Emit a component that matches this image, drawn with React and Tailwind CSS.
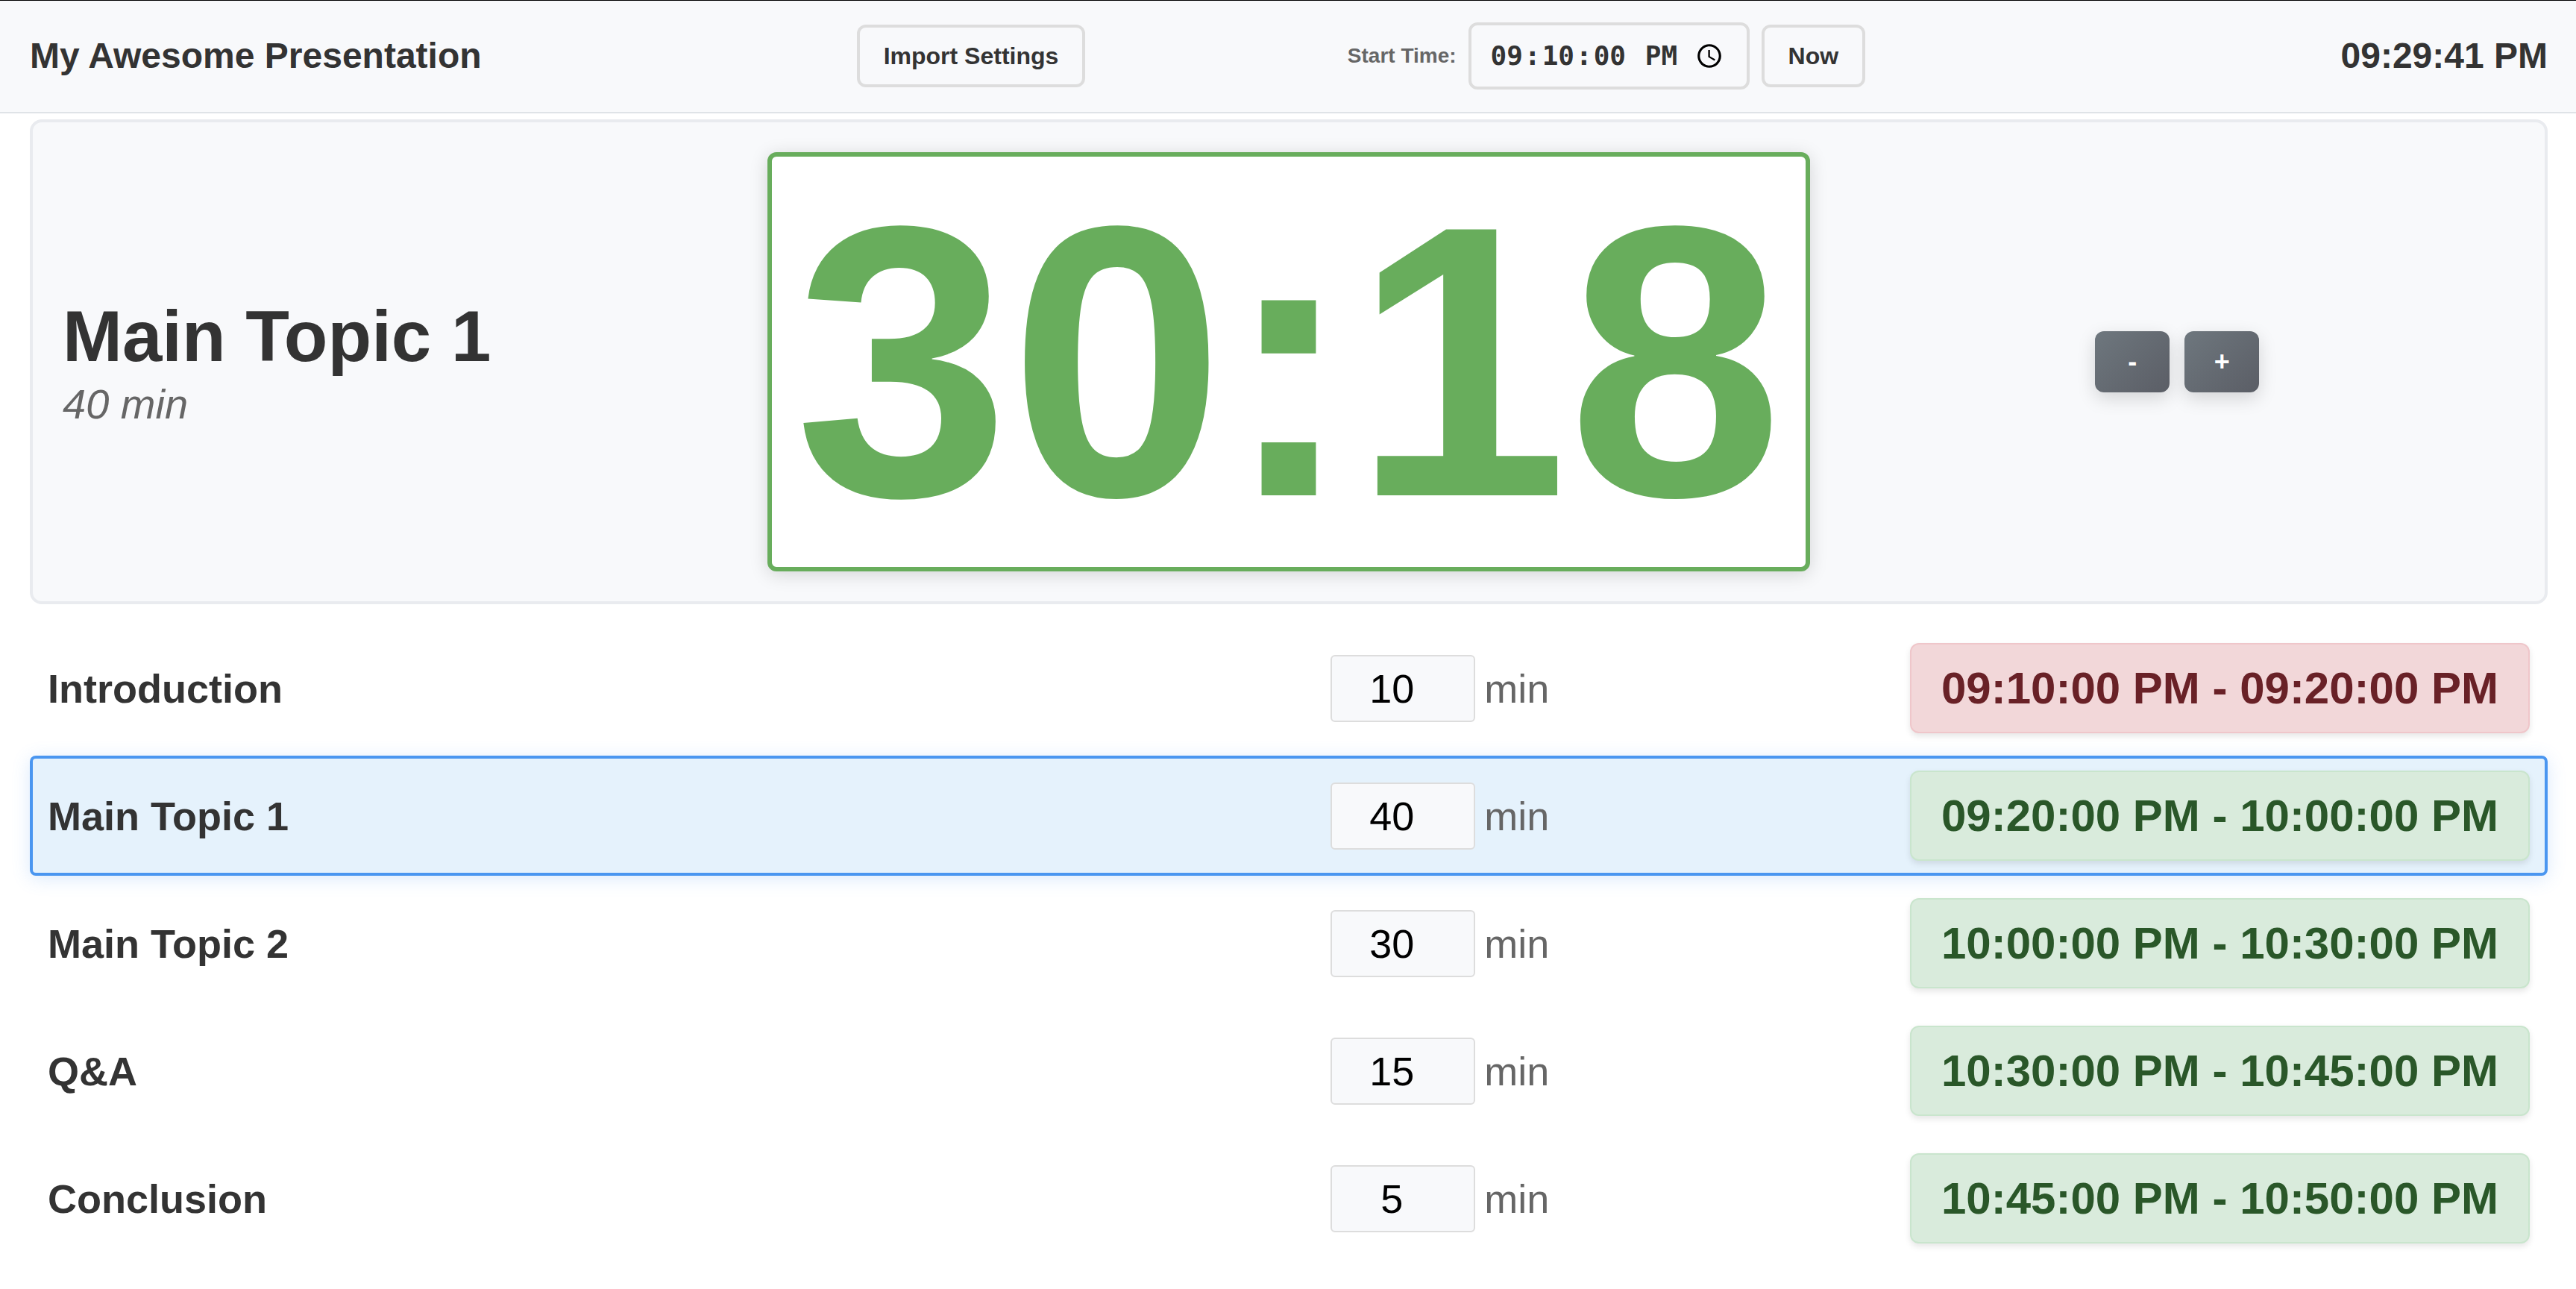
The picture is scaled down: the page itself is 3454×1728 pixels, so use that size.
import { useState } from "react";

const initialTopics = [
  { name: "Introduction", minutes: 10, range: "09:10:00 PM - 09:20:00 PM", status: "past" },
  { name: "Main Topic 1", minutes: 40, range: "09:20:00 PM - 10:00:00 PM", status: "current" },
  { name: "Main Topic 2", minutes: 30, range: "10:00:00 PM - 10:30:00 PM", status: "next" },
  { name: "Q&A", minutes: 15, range: "10:30:00 PM - 10:45:00 PM", status: "next" },
  { name: "Conclusion", minutes: 5, range: "10:45:00 PM - 10:50:00 PM", status: "next" },
];

function HeaderButton({ children }) {
  return (
    <button
      type="button"
      className="h-[84px] rounded-xl border-4 border-[#dddddd] bg-[#f8f9fb] px-8 text-[32px] leading-none font-bold whitespace-nowrap"
    >
      {children}
    </button>
  );
}

function Header() {
  const [start, setStart] = useState("21:10:00");
  return (
    <header className="grid grid-cols-4 items-center gap-8 border-t border-b-2 border-t-black border-b-[#dfe3e7] bg-[#f8f9fb] pt-[29px] pr-[38px] pb-[30px] pl-10">
      <h1 className="text-5xl leading-none font-bold whitespace-nowrap">My Awesome Presentation</h1>
      <div className="flex justify-center">
        <HeaderButton>Import Settings</HeaderButton>
      </div>
      <div className="flex items-center justify-center gap-4">
        <label htmlFor="start-time" className="text-[28px] font-bold whitespace-nowrap text-[#666666]">
          Start Time:
        </label>
        <input
          id="start-time"
          type="time"
          step="1"
          value={start}
          onChange={(e) => setStart(e.target.value)}
          className="h-[90px] w-[377px] rounded-xl border-4 border-[#dddddd] bg-[#f8f9fb] pr-7 pl-6 font-['DejaVu_Sans_Mono',monospace] text-4xl font-bold [&::-webkit-datetime-edit-ampm-field]:px-0.5 [&::-webkit-datetime-edit-hour-field]:px-0.5 [&::-webkit-datetime-edit-minute-field]:px-0.5 [&::-webkit-datetime-edit-second-field]:px-0.5"
        />
        <HeaderButton>Now</HeaderButton>
      </div>
      <time className="text-right text-5xl leading-none font-bold whitespace-nowrap">09:29:41 PM</time>
    </header>
  );
}

function AdjustButton({ label, children }) {
  return (
    <button
      type="button"
      aria-label={label}
      className="h-[82px] w-[100px] rounded-xl bg-linear-135 from-[#6e777e] to-[#5b5e66] text-4xl leading-none font-bold text-white shadow-[0_8px_24px_rgba(0,0,0,0.15)]"
    >
      {children}
    </button>
  );
}

function CurrentTopic() {
  return (
    <section className="grid grid-cols-[1fr_auto_1fr] items-center gap-10 rounded-2xl border-4 border-[#e9ebef] bg-[#f8f9fb] p-10">
      <div>
        <h2 className="text-8xl leading-[110px] font-bold whitespace-nowrap">Main Topic 1</h2>
        <p className="mt-1 text-[56px] leading-[64px] text-[#666666] italic">40 min</p>
      </div>
      <div
        role="timer"
        className="rounded-xl border-6 border-[#68ad5c] bg-white px-[30px] py-4 text-[15vw] leading-none font-bold text-[#68ad5c] shadow-[0_4px_24px_rgba(0,0,0,0.15)]"
      >
        30:18
      </div>
      <div className="flex justify-center gap-5">
        <AdjustButton label="Decrease">-</AdjustButton>
        <AdjustButton label="Increase">+</AdjustButton>
      </div>
    </section>
  );
}

function TopicRow({ topic, onMinutes }) {
  const active = topic.status === "current";
  const past = topic.status === "past";
  return (
    <li
      className={`grid grid-cols-[1fr_1fr_auto] items-center gap-3 rounded-lg border-4 px-5 py-4 ${
        active
          ? "border-[#4a96f0] bg-[#e5f2fc] shadow-[0_4px_24px_rgba(74,150,240,0.2)]"
          : "border-transparent"
      }`}
    >
      <span className="text-[54px] leading-none font-bold">{topic.name}</span>
      <label className="flex items-center justify-center gap-3 text-[54px] leading-none text-[#666666]">
        <input
          type="number"
          aria-label={`${topic.name} duration in minutes`}
          value={topic.minutes}
          onChange={(e) => onMinutes(e.target.value)}
          className="h-[90px] w-[194px] appearance-none rounded-md border-2 border-[#dddddd] bg-[#f8f9fb] pr-[46px] pl-4 text-center text-black [-moz-appearance:textfield] [&::-webkit-inner-spin-button]:appearance-none"
        />
        min
      </label>
      <time
        className={`rounded-xl border-2 px-10 py-6 text-[60px] leading-[69px] font-bold whitespace-nowrap shadow-[0_4px_8px_rgba(0,0,0,0.1)] ${
          past
            ? "border-[#efc6ca] bg-[#f2d7d9] text-[#692127]"
            : "border-[#c9e5cd] bg-[#d9ebdc] text-[#2a5729]"
        }`}
      >
        {topic.range}
      </time>
    </li>
  );
}

export default function App() {
  const [topics, setTopics] = useState(initialTopics);
  const setMinutes = (index, minutes) =>
    setTopics(topics.map((t, i) => (i === index ? { ...t, minutes } : t)));
  return (
    <div className="min-h-screen bg-white font-['Liberation_Sans',Arial,sans-serif] text-[#333333]">
      <Header />
      <main className="pt-2 pr-[38px] pl-10">
        <CurrentTopic />
        <ul className="mt-8 flex flex-col gap-[10px]">
          {topics.map((topic, i) => (
            <TopicRow key={topic.name} topic={topic} onMinutes={(m) => setMinutes(i, m)} />
          ))}
        </ul>
      </main>
    </div>
  );
}
